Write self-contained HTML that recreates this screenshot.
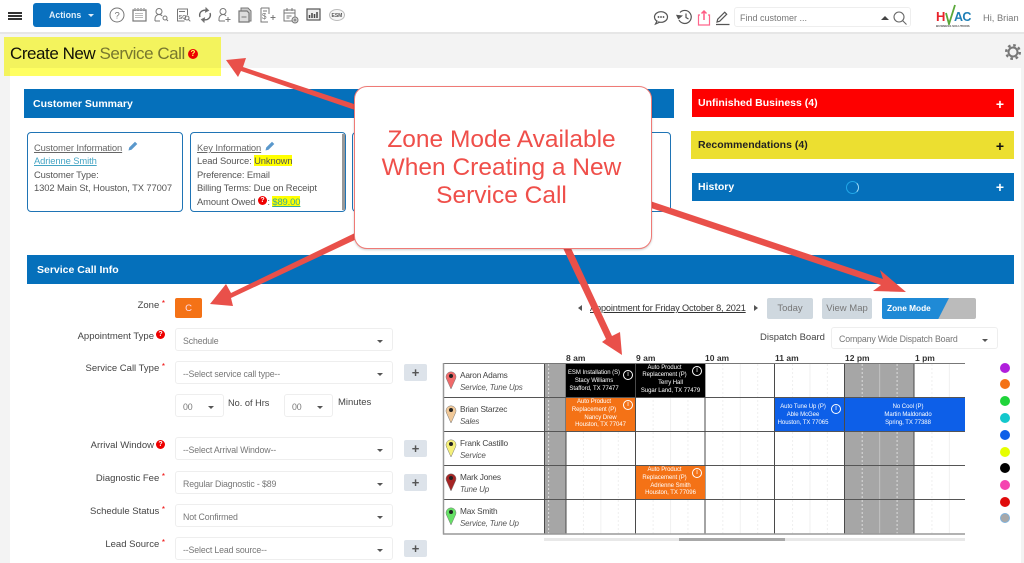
<!DOCTYPE html>
<html lang="en"><head><meta charset="utf-8"><title>Create New Service Call</title>
<style>
html,body{margin:0;padding:0;width:1024px;height:563px;overflow:hidden;background:#fff}
#r{position:relative;width:1024px;height:563px;overflow:hidden;font-family:"Liberation Sans",sans-serif;color:#444;filter:blur(.3px)}
#r div,#r span.a,#r svg{position:absolute}
.t{white-space:nowrap}
.bar{color:#fff;font-weight:bold;font-size:10.5px;line-height:28px;padding-left:6px;box-sizing:border-box}
.card{border:1.5px solid #1f74b5;border-radius:4px;box-sizing:border-box;background:#fff;top:132px;height:80px}
.cl{font-size:9.4px;letter-spacing:-.1px;line-height:13.4px;color:#555;white-space:nowrap}
.l{right:859px;font-size:9.5px;color:#444;white-space:nowrap;line-height:12px;text-align:right}
.s{color:#e00;font-size:8px;position:relative;top:-2px}
.sel{border:1px solid #eee;border-radius:3px;background:#fff;box-sizing:border-box;left:175px;width:218px;height:23px;font-size:8.8px;letter-spacing:-.15px;line-height:25px;color:#777;padding-left:7px;white-space:nowrap}
.sel:after{content:"";position:absolute;right:9px;top:11px;border:3.5px solid transparent;border-top:3.5px solid #555;border-bottom:0}
.p{left:404px;width:23px;height:17px;background:#dde3ea;border-radius:2px;color:#555;font-weight:bold;font-size:13px;line-height:18px;text-align:center}
.h{top:353px;font-size:8.5px;font-weight:bold;color:#333;white-space:nowrap;line-height:10px}
.n{left:460px;font-size:8.3px;letter-spacing:-.2px;color:#444;white-space:nowrap;line-height:11px}
.ro{left:460px;font-size:8px;letter-spacing:-.15px;font-style:italic;color:#555;white-space:nowrap;line-height:11px}
.e{color:#fff;font-size:6px;letter-spacing:-.05px;line-height:7.8px;text-align:center;box-sizing:border-box;white-space:nowrap;overflow:hidden}
.e span{display:block}
.i{width:10px;height:10px;box-sizing:border-box;border:1px solid #fff;border-radius:50%;font-size:7px;line-height:8px;text-align:center;color:#fff}
.d{left:1000px;width:10px;height:10px;border-radius:50%}
.q{width:10px;height:10px;border-radius:50%;background:#e00;color:#fff;font-size:8px;font-weight:bold;line-height:10px;text-align:center}
.q2{width:9px;height:9px;line-height:9px;font-size:7px}
</style></head><body><div id="r">

<!-- backgrounds -->
<div style="left:0;top:33px;width:1024px;height:530px;background:#f3f3f3"></div>
<div style="left:0;top:32px;width:1024px;height:2px;background:#e6e6e6"></div>
<div style="left:10px;top:68px;width:1011px;height:495px;background:#fff"></div>

<!-- top toolbar -->
<div style="left:8px;top:12px;width:14px;height:1.5px;background:#333"></div>
<div style="left:8px;top:15px;width:14px;height:1.5px;background:#333"></div>
<div style="left:8px;top:18px;width:14px;height:1.5px;background:#333"></div>
<div class="t" style="left:33px;top:3px;width:68px;height:24px;background:#0870bf;border-radius:3px;color:#dfeefa;font-size:8.8px;font-weight:bold;line-height:25px;padding-left:16px;box-sizing:border-box">Actions</div>
<div style="left:88px;top:14px;border:3px solid transparent;border-top:3px solid #dfeefa;border-bottom:0"></div>

<svg style="left:105px;top:3px" width="245" height="25" viewBox="105 3 245 25" fill="none" stroke="#777" stroke-width="1">
<circle cx="117" cy="15" r="7"/><text x="114.5" y="18.5" font-size="9.500" fill="#777" stroke="none" font-family="Liberation Sans">?</text>
<rect x="133" y="10" width="13" height="11" stroke-width="1.2"/><path d="M135 8v3M138 8v3M141 8v3M144 8v3M135.5 13.500h8M135.500 15.500h8M135.500 17.500h8" stroke-dasharray="1 1"/>
<circle cx="159" cy="11.500" r="3"/><path d="M155 21v-2c0-3 2-4.500 4-4.500 1.500 0 2.500.5 3.200 1.500M155 21h5"/><circle cx="165" cy="18" r="2"/><path d="M166.500 19.500l1.500 1.500"/>
<path d="M177.500 9h10v6M177.500 9v12h7"/><text x="178.500" y="19" font-size="5.500" font-weight="bold" fill="#777" stroke="none" font-family="Liberation Sans">SQ</text><circle cx="187" cy="18" r="2"/><path d="M188.500 19.500l1.800 1.800"/><path d="M179 11.500h6"/>
<path d="M200 17c-1.500-4 2-8 7-6.500M210 13c1.500 4-2 8-7 6.500" stroke-width="1.400" stroke="#666"/><path d="M206 8l2.500 2.500-3 1.500zM204 22l-2.500-2.500 3-1.500z" fill="#666"/>
<circle cx="223" cy="11.500" r="3"/><path d="M219 21v-2c0-3 2-4.500 4-4.500 1.500 0 2.500.5 3 1.500M219 21h6M228 17v5M225.500 19.500h5"/>
<path d="M241 11V8h7l3 3v10h-2" fill="#ccc"/><path d="M239 11h8l2 2v9h-10z" fill="#ddd" stroke-width="1.200"/><path d="M241.500 17h5"/>
<path d="M261 8h8v6M261 8v14h7"/><text x="262" y="19" font-size="8" fill="#777" stroke="none" font-family="Liberation Sans">$</text><path d="M263 11h4M273 15v5M270.500 17.500h5"/>
<rect x="284" y="10" width="11" height="11"/><path d="M284 13h11M287 8v3M292 8v3M286.500 16h5M286.500 18h3"/><circle cx="295" cy="20" r="3" fill="#ddd"/><path d="M295 18.500v3M293.500 20h3"/>
<rect x="307" y="9" width="13" height="11" fill="#eee" stroke="#555" stroke-width="1.200"/><path d="M309.500 18v-3M312 18v-5M314.500 18v-4M317 18v-6" stroke="#444" stroke-width="1.500"/>
<ellipse cx="337" cy="15" rx="7.500" ry="5.500" stroke="#bbb" fill="#f6f6f6"/><text x="331.500" y="17" font-size="5" font-weight="bold" fill="#555" stroke="none" font-family="Liberation Sans">ESM</text>
</svg>

<svg style="left:652px;top:5px" width="82" height="24" viewBox="652 5 82 24" fill="none" stroke="#555" stroke-width="1.200">
<ellipse cx="661" cy="17" rx="6.500" ry="5.300"/><path d="M657 21l-1.500 3 4-1.800" fill="#fff"/><circle cx="658.500" cy="17" r=".9" fill="#444" stroke="none"/><circle cx="661" cy="17" r=".9" fill="#444" stroke="none"/><circle cx="663.500" cy="17" r=".9" fill="#444" stroke="none"/>
<path d="M680 12.500a6.500 6.500 0 1 1-1 7.500"/><path d="M677 15.500l1.500 3 3-2.500z" fill="#555"/><path d="M686 13.500v4l2.500 1.500"/>
<path d="M700 15h-1.500v10h11V15H708" stroke="#f36" stroke-opacity=".75"/><path d="M704 20V11M701.500 13.500L704 11l2.500 2.500" stroke="#f36" stroke-width="1.500" stroke-opacity=".8"/>
<path d="M717 22l.7-2.800 7-7 2 2-7 7zM716 24.500h13.500"/>
</svg>

<div style="left:734px;top:7px;width:177px;height:20px;border:1px solid #eee;border-radius:3px;box-sizing:border-box"></div>
<div class="t" style="left:740px;top:12px;font-size:9px;line-height:13px;color:#777">Find customer ...</div>
<div style="left:881px;top:16px;border:4px solid transparent;border-bottom:4px solid #444;border-top:0"></div>
<svg style="left:892px;top:9px" width="16" height="16" fill="none" stroke="#666" stroke-width="1.100"><circle cx="7" cy="8" r="5"/><path d="M10.500 11.500l4 4"/></svg>

<div class="t" style="left:936px;top:10px;font-size:13px;font-weight:bold;line-height:14px;color:#e8222a">H</div>
<div class="t" style="left:954px;top:10px;font-size:12.500px;font-weight:bold;line-height:14px;letter-spacing:-.6px;color:#1f7fb6">AC</div>
<svg style="left:945px;top:4px" width="12" height="21" fill="none" stroke="#5aa83a" stroke-width="1.800"><path d="M1 9l3 11L10 1"/></svg>
<div class="t" style="left:936px;top:24px;font-size:3px;line-height:4px;color:#555;font-weight:bold">BUSINESS SOLUTIONS</div>
<div class="t" style="left:983px;top:12px;font-size:9.300px;line-height:13px;color:#777">Hi, Brian</div>

<!-- title -->
<div class="t" style="left:10px;top:43px;font-size:17px;line-height:21px;color:#111;letter-spacing:-.45px">Create New <span style="color:#777">Service Call</span></div>
<div class="q" style="left:188px;top:49px">?</div>
<svg style="left:1004px;top:43px" width="18" height="18" viewBox="0 0 18 18" fill="none" stroke="#777"><circle cx="9" cy="9" r="4.500" stroke-width="2"/><circle cx="9" cy="9" r="6.800" stroke-width="2.400" stroke-dasharray="2.600 2.740"/></svg>

<!-- customer summary -->
<div class="bar" style="left:24px;top:89px;width:650px;height:29px;background:#0570bb;padding-left:9px;line-height:31px">Customer Summary</div>

<div class="card" style="left:27px;width:156px"></div>
<div class="cl" style="left:34px;top:141px"><span style="text-decoration:underline;color:#666">Customer Information</span><br><span style="text-decoration:underline;color:#45a5c4">Adrienne Smith</span><br>Customer Type:<br>1302 Main St, Houston, TX 77007</div>
<svg style="left:127px;top:140px" width="12" height="12"><path d="M1.500 10.500l.7-3L8 1.700l2.300 2.300L4.500 9.800z" fill="#5a98cc"/></svg>

<div class="card" style="left:190px;width:156px"></div>
<div style="left:342px;top:134px;width:3px;height:76px;background:#999"></div>
<div class="cl" style="left:197px;top:141px"><span style="text-decoration:underline;color:#666">Key Information</span><br>Lead Source: <span style="background:#ff0;color:#555">Unknown</span><br>Preference: Email<br>Billing Terms: Due on Receipt<br>Amount Owed<span style="display:inline-block;width:12px"></span>: <span style="background:#ff0;color:#3a9;text-decoration:underline">$89.00</span></div>
<svg style="left:264px;top:140px" width="12" height="12"><path d="M1.500 10.500l.7-3L8 1.700l2.300 2.300L4.500 9.800z" fill="#5a98cc"/></svg>
<div class="q q2" style="left:258px;top:196px">?</div>

<div class="card" style="left:352px;width:319px"></div>

<!-- right panels -->
<div class="bar" style="left:692px;top:89px;width:322px;height:28px;background:#fe0000">Unfinished Business (4)<span class="a" style="right:10px;top:1px;font-size:14px">+</span></div>
<div class="bar" style="left:691px;top:131px;width:323px;height:28px;background:#ecdf30;color:#222;padding-left:7px">Recommendations (4)<span class="a" style="right:10px;top:1px;font-size:14px;color:#111">+</span></div>
<div class="bar" style="left:692px;top:173px;width:322px;height:28px;background:#0570bb;line-height:29px">History<span class="a" style="right:10px;top:0;font-size:14px;line-height:28px">+</span></div>
<div style="left:846px;top:181px;width:11px;height:11px;border:1.500px solid #22a7e8;border-radius:50%;border-right-color:#9fdcf7"></div>

<!-- service call info -->
<div class="bar" style="left:27px;top:255px;width:987px;height:29px;background:#0570bb;padding-left:10px;line-height:30px">Service Call Info</div>

<div class="l" style="top:300px">Zone <span class="s">*</span></div>
<div class="t" style="left:175px;top:298px;width:27px;height:20px;background:#f47216;border-radius:2px;color:#fde;font-size:9.500px;line-height:21px;text-align:center">C</div>

<div class="l" style="top:331px;right:870px">Appointment Type</div>
<div class="q q2" style="left:156px;top:330px">?</div>
<div class="sel" style="top:328px">Schedule</div>

<div class="l" style="top:363px">Service Call Type <span class="s">*</span></div>
<div class="sel" style="top:361px">--Select service call type--</div>
<div class="p" style="top:364px">+</div>

<div class="sel" style="top:394px;width:49px">00</div>
<div class="t" style="left:228px;top:397px;font-size:9.200px;line-height:12px;color:#444">No. of Hrs</div>
<div class="sel" style="top:394px;left:284px;width:49px">00</div>
<div class="t" style="left:338px;top:397px;font-size:9.500px;line-height:12px;color:#444">Minutes</div>

<div class="l" style="top:440px;right:870px">Arrival Window</div>
<div class="q q2" style="left:156px;top:440px">?</div>
<div class="sel" style="top:437px">--Select Arrival Window--</div>
<div class="p" style="top:440px">+</div>

<div class="l" style="top:473px">Diagnostic Fee <span class="s">*</span></div>
<div class="sel" style="top:471px">Regular Diagnostic - $89</div>
<div class="p" style="top:474px">+</div>

<div class="l" style="top:506px">Schedule Status <span class="s">*</span></div>
<div class="sel" style="top:504px">Not Confirmed</div>

<div class="l" style="top:539px">Lead Source <span class="s">*</span></div>
<div class="sel" style="top:537px">--Select Lead source--</div>
<div class="p" style="top:540px">+</div>

<!-- schedule header -->
<div style="left:578px;top:305px;border:3px solid transparent;border-right:4px solid #555;border-left:0"></div>
<div class="t" style="left:590px;top:302px;font-size:9.200px;letter-spacing:-.15px;line-height:13px;color:#333;text-decoration:underline">Appointment for Friday October 8, 2021</div>
<div style="left:754px;top:305px;border:3px solid transparent;border-left:4px solid #555;border-right:0"></div>
<div class="t" style="left:767px;top:298px;width:46px;height:21px;background:#cfd8df;border-radius:2px;color:#777;font-size:9.500px;line-height:21px;text-align:center">Today</div>
<div class="t" style="left:822px;top:298px;width:50px;height:21px;background:#cfd8df;border-radius:2px;color:#777;font-size:9.500px;line-height:21px;text-align:center">View Map</div>
<div style="left:882px;top:298px;width:94px;height:21px;background:#bbb;border-radius:2px"></div>
<div class="t" style="left:882px;top:298px;width:67px;height:21px;background:#1f8ad6;clip-path:polygon(0 0,100% 0,84% 100%,0 100%);border-radius:2px 0 0 2px;color:#fff;font-size:8.300px;font-weight:bold;line-height:21px;padding-left:5px;box-sizing:border-box">Zone Mode</div>
<div class="t" style="left:760px;top:332px;font-size:9.500px;line-height:12px;color:#444">Dispatch Board</div>
<div class="sel" style="left:831px;top:327px;width:167px;height:22px;line-height:23px">Company Wide Dispatch Board</div>

<div class="h" style="left:566px">8 am</div>
<div class="h" style="left:636px">9 am</div>
<div class="h" style="left:705px">10 am</div>
<div class="h" style="left:775px">11 am</div>
<div class="h" style="left:845px">12 pm</div>
<div class="h" style="left:915px">1 pm</div>

<!-- grid -->
<svg style="left:440px;top:360px" width="530" height="185" viewBox="440 360 530 185">
<defs>
<pattern id="w" x="566" y="0" width="69.700" height="8" patternUnits="userSpaceOnUse">
<path d="M17.400 0v2M52.300 0v2M17.400 4v2M52.300 4v2" stroke="#efefef"/><path d="M34.850 0v8" stroke="#f0f0f0"/>
</pattern>
<pattern id="g" x="566" y="0" width="69.700" height="8" patternUnits="userSpaceOnUse">
<path d="M17.400 0v2M52.300 0v2M17.400 4v2M52.300 4v2" stroke="#ddd"/><path d="M34.850 0v8" stroke="#c2c2c2"/>
</pattern>
</defs>
<rect x="545" y="363" width="420" height="171" fill="url(#w)"/>
<rect x="545" y="363" width="21" height="171" fill="#a6a6a6"/>
<rect x="844.300" y="363" width="69.400" height="171" fill="#a6a6a6"/>
<rect x="844.300" y="363" width="69.400" height="171" fill="url(#g)"/>
<rect x="545" y="363" width="21" height="171" fill="url(#g)"/>
<g stroke="#555" stroke-width="1">
<path d="M443 397.500H965M443 431.500H965M443 465.500H965M443 499.500H965"/>
<path d="M544.500 363V534M566 363V534M635.500 363V534M705 363V534M774.500 363V534M844.500 363V534M914 363V534" stroke="#4a4a4a"/>
</g>
<path d="M443 363.500H965" stroke="#777" stroke-width="1"/>
<path d="M443 534H965" stroke="#999" stroke-width="1.500"/>
<path d="M443.500 363V534.500" stroke="#999" stroke-width="1.500"/>
<rect x="544" y="538" width="421" height="3" fill="#e8e8e8"/>
<rect x="679" y="538" width="106" height="3" fill="#a8a8a8"/>
<!-- pins -->
<g stroke="#777" stroke-width=".5">
<path d="M451 389l-4.500-10a5 5 0 1 1 9 0z" fill="#f06a6a"/>
<path d="M451 423l-4.500-10a5 5 0 1 1 9 0z" fill="#f0c898"/>
<path d="M451 457l-4.500-10a5 5 0 1 1 9 0z" fill="#f5f07a"/>
<path d="M451 491l-4.500-10a5 5 0 1 1 9 0z" fill="#a52525"/>
<path d="M451 525l-4.500-10a5 5 0 1 1 9 0z" fill="#66e066"/>
</g>
<g fill="#222"><circle cx="451" cy="376" r="2"/><circle cx="451" cy="410" r="2"/><circle cx="451" cy="444" r="2"/><circle cx="451" cy="478" r="2"/><circle cx="451" cy="512" r="2"/></g>
</svg>

<div class="n" style="top:370px">Aaron Adams</div><div class="ro" style="top:381.500px">Service, Tune Ups</div>
<div class="n" style="top:404px">Brian Starzec</div><div class="ro" style="top:415.500px">Sales</div>
<div class="n" style="top:438px">Frank Castillo</div><div class="ro" style="top:449.500px">Service</div>
<div class="n" style="top:472px">Mark Jones</div><div class="ro" style="top:483.500px">Tune Up</div>
<div class="n" style="top:506px">Max Smith</div><div class="ro" style="top:517.500px">Service, Tune Up</div>

<!-- events -->
<div class="e" style="left:566px;top:364px;width:69px;height:33px;background:#000;padding:4.700px 13px 0 0;line-height:8px">ESM Installation (S)<br>Stacy Williams<br>Stafford, TX 77477</div>
<div class="i" style="left:623px;top:370px">i</div>
<div class="e" style="left:636px;top:364px;width:69px;height:33px;background:#000;padding-top:.5px"><span style="padding-right:12px">Auto Product</span><span style="padding-right:12px">Replacement (P)</span><span>Terry Hall</span><span>Sugar Land, TX 77479</span></div>
<div class="i" style="left:692px;top:366px">i</div>

<div class="e" style="left:566px;top:398px;width:69px;height:33px;background:#f47216;padding-top:1px"><span style="padding-right:13px">Auto Product</span><span style="padding-right:13px">Replacement (P)</span><span>Nancy Drew</span><span>Houston, TX 77047</span></div>
<div class="i" style="left:623px;top:400px">i</div>

<div class="e" style="left:775px;top:398px;width:69px;height:33px;background:#0d5fe8;padding:4.700px 13px 0 0;line-height:8px">Auto Tune Up (P)<br>Able McGee<br>Houston, TX 77065</div>
<div class="i" style="left:831px;top:404px">i</div>
<div class="e" style="left:845px;top:398px;width:120px;height:33px;background:#0d5fe8;padding:4.700px 0 0 6px;line-height:8px">No Cool (P)<br>Martin Maldonado<br>Spring, TX 77388</div>

<div class="e" style="left:636px;top:466px;width:69px;height:33px;background:#f47216;padding-top:1px"><span style="padding-right:12px">Auto Product</span><span style="padding-right:12px">Replacement (P)</span><span>Adrienne Smith</span><span>Houston, TX 77096</span></div>
<div class="i" style="left:692px;top:468px">i</div>

<!-- legend dots -->
<div class="d" style="top:363px;background:#b01fdc"></div>
<div class="d" style="top:379px;background:#f47216"></div>
<div class="d" style="top:396px;background:#1fd43a"></div>
<div class="d" style="top:413px;background:#13c8cc"></div>
<div class="d" style="top:430px;background:#0d5fe8"></div>
<div class="d" style="top:447px;background:#e6ff00"></div>
<div class="d" style="top:463px;background:#000"></div>
<div class="d" style="top:480px;background:#f545b0"></div>
<div class="d" style="top:497px;background:#e00b0b"></div>
<div class="d" style="top:513px;background:#a8a8a8;box-sizing:border-box;border:1px solid #7fb2dc"></div>

<!-- yellow highlight -->
<div style="left:4px;top:37px;width:217px;height:39px;background:#ffff00;opacity:.62;mix-blend-mode:multiply"></div>

<!-- arrows -->
<svg style="left:0;top:0" width="1024" height="563" fill="#e9504a" stroke="none">
<path d="M357 105L243 67L246 58L226 60L238 77L241 71L355 110Z"/>
<path d="M357 232L231 293L226 284L210 304L233 306L231 298L359 238Z"/>
<path d="M563 248L606 339L602 342L622 355L620 332L612 336L570 246Z"/>
<path d="M650 201L883 279L880 270L906 292L873 291L881 285L648 207Z"/>
</svg>

<!-- callout -->
<div style="left:354px;top:86px;width:298px;height:163px;background:#fff;border:1.500px solid #ef7a76;border-radius:13px;box-sizing:border-box;box-shadow:0 1px 2px rgba(0,0,0,.2)"></div>
<div style="left:352.500px;top:126px;width:298px;text-align:center;font-size:24.500px;line-height:28px;color:#ef4f4a">Zone Mode Available<br>When Creating a New<br>Service Call</div>

</div></body></html>
